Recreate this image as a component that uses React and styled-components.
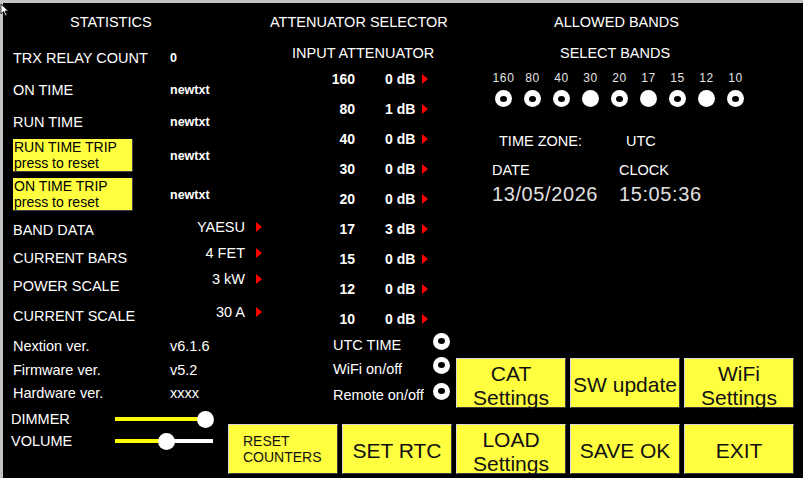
import React from 'react';
import styled, { createGlobalStyle } from 'styled-components';

const Global = createGlobalStyle`
  * { box-sizing: border-box; }
  html, body { margin: 0; padding: 0; background: #c3c3c3; }
  body { width: 803px; height: 478px; overflow: hidden; }
`;

const YELLOW = '#ffff40';

const Screen = styled.div`
  margin: 3px 0 0 3px;
  width: 800px;
  height: 475px;
  background: #000;
  color: #fff;
  display: flex;
  font-family: "Liberation Sans", Arial, sans-serif;
  font-size: 14.5px;
  position: relative;
`;

const LeftCol = styled.div`
  width: 222px;
  flex-shrink: 0;
  padding-left: 10px;
  display: flex;
  flex-direction: column;
`;

const Main = styled.div`
  flex: 1;
  display: flex;
  flex-direction: column;
`;

const Upper = styled.div`
  height: 418px;
  display: grid;
  grid-template-columns: 230px 1fr;
`;

const Column = styled.div`
  display: flex;
  flex-direction: column;
`;

const Heading = styled.div`
  height: ${({ $h }) => $h}px;
  display: flex;
  align-items: center;
  padding-left: ${({ $x }) => $x}px;
  white-space: nowrap;
`;

const Row = styled.div`
  height: ${({ $h }) => $h}px;
  margin-top: ${({ $mt }) => $mt || 0}px;
  display: flex;
  align-items: center;
  white-space: nowrap;
`;

const Label = styled.span`
  width: ${({ $w }) => $w}px;
  flex-shrink: 0;
  margin-left: ${({ $ml }) => $ml || 0}px;
`;

const Value = styled.span`
  font-size: 12.5px;
  font-weight: 700;
`;

const TripBox = styled.div`
  width: 120px;
  height: 33px;
  background: ${YELLOW};
  color: #000;
  font-size: 14px;
  line-height: 16px;
  padding: 0 0 0 1px;
  border-right: 1px solid #444;
  border-bottom: 1px solid #444;
`;

const Pick = styled.span`
  display: flex;
  align-items: center;
  margin-bottom: ${({ $lift }) => $lift * 2}px;
`;

const PickText = styled.span`
  width: 75px;
  text-align: right;
`;

const Arrow = styled.span`
  display: inline-block;
  width: 0;
  height: 0;
  margin-left: ${({ $ml }) => $ml}px;
  border-left: 6px solid #ff0000;
  border-top: 5px solid transparent;
  border-bottom: 5px solid transparent;
`;

const SliderTrack = styled.div`
  position: relative;
  width: 98px;
  height: 4px;
  background: #fff;
`;

const SliderFill = styled.div`
  height: 100%;
  background: #ffff00;
`;

const Knob = styled.div`
  position: absolute;
  top: 50%;
  width: 17px;
  height: 17px;
  margin: -8.5px 0 0 -8.5px;
  border-radius: 50%;
  background: #fff;
`;

const BandNum = styled.span`
  width: 130px;
  text-align: right;
  font-weight: 700;
  font-size: 14px;
`;

const Db = styled.span`
  margin-left: 30px;
  width: 37px;
  font-weight: 700;
  font-size: 14px;
`;

const Radio = styled.span`
  position: relative;
  display: inline-block;
  flex-shrink: 0;
  width: 17px;
  height: 17px;
  border-radius: 50%;
  background: #fff;
  margin-bottom: ${({ $mb }) => $mb || 0}px;

  &::after {
    content: '';
    display: ${({ $filled }) => ($filled ? 'none' : 'block')};
    position: absolute;
    left: 5px;
    top: 5.5px;
    width: 7px;
    height: 6px;
    border-radius: 50%;
    background: #000;
  }
`;

const BandGrid = styled.div`
  display: flex;
  padding-left: 34px;
  margin-top: 3px;
`;

const BandCell = styled.div`
  width: 29px;
  display: flex;
  flex-direction: column;
  align-items: center;
`;

const BandLabel = styled.span`
  height: 22px;
  line-height: 22px;
  font-size: 12px;
  color: #e4e4e4;
  letter-spacing: 0.6px;
  margin-bottom: 1px;
`;

const TimeRow = styled.div`
  display: flex;
  align-items: center;
  height: ${({ $h }) => $h}px;
  margin-top: ${({ $mt }) => $mt}px;
  padding-left: ${({ $x }) => $x}px;
  font-size: ${({ $big }) => ($big ? '20px' : '14.5px')};
  letter-spacing: ${({ $big }) => ($big ? '0.6px' : '0')};
  color: ${({ $big }) => ($big ? '#e0e0e0' : '#fff')};
`;

const TimeCell = styled.span`
  width: 127px;
  flex-shrink: 0;
`;

const Spacer = styled.div`
  flex: 1;
`;

const ButtonRow = styled.div`
  display: flex;
  gap: 4px;
  margin: ${({ $m }) => $m};
`;

const Button = styled.button`
  width: 110px;
  height: 50px;
  padding: ${({ $small }) => ($small ? '0 0 0 14px' : '3px 0 0')};
  background: ${YELLOW};
  color: #111;
  font-family: "Liberation Sans", Arial, sans-serif;
  font-size: ${({ $small }) => ($small ? '14px' : '21px')};
  line-height: ${({ $small }) => ($small ? '16px' : '24px')};
  text-align: ${({ $small }) => ($small ? 'left' : 'center')};
  border: 1px solid;
  border-color: #d8d8d8 #3c3c3c #3c3c3c #d8d8d8;
  border-radius: 0;
  cursor: pointer;
`;

const Cursor = styled.svg`
  position: absolute;
  left: -3px;
  top: 0;
`;

const picks = [
  { label: 'BAND DATA', value: 'YAESU', h: 30, lift: 3 },
  { label: 'CURRENT BARS', value: '4 FET', h: 26, lift: 5 },
  { label: 'POWER SCALE', value: '3 kW', h: 30, lift: 7 },
  { label: 'CURRENT SCALE', value: '30 A', h: 29, lift: 4 },
];

const versions = [
  ['Nextion ver.', 'v6.1.6', 24],
  ['Firmware ver.', 'v5.2', 23],
  ['Hardware ver.', 'xxxx', 24],
];

const attenuators = [
  ['160', 0], ['80', 1], ['40', 0], ['30', 0], ['20', 0],
  ['17', 3], ['15', 0], ['12', 0], ['10', 0],
];

const toggles = [
  ['UTC TIME', 22],
  ['WiFi on/off', 26],
  ['Remote on/off', 26],
];

const bands = [
  ['160', false], ['80', false], ['40', false], ['30', true], ['20', false],
  ['17', true], ['15', false], ['12', true], ['10', false],
];

function Slider({ value }) {
  return (
    <SliderTrack>
      <SliderFill style={{ width: `${value}%` }} />
      <Knob style={{ left: `${value}%` }} />
    </SliderTrack>
  );
}

export default function App() {
  return (
    <>
      <Global />
      <Screen>
        <Cursor width="10" height="14" viewBox="0 0 10 14">
          <path d="M1 1 L1 11 L3.5 8.5 L5.5 13 L7 12.3 L5 8 L8.5 8 Z" fill="#fff" stroke="#000" strokeWidth="0.8" />
        </Cursor>

        <LeftCol>
          <Heading $h={38} $x={57}>STATISTICS</Heading>
          <Row $h={34}>
            <Label $w={157}>TRX RELAY COUNT</Label>
            <Value>0</Value>
          </Row>
          <Row $h={30}>
            <Label $w={157}>ON TIME</Label>
            <Value>newtxt</Value>
          </Row>
          <Row $h={34}>
            <Label $w={157}>RUN TIME</Label>
            <Value>newtxt</Value>
          </Row>
          <Row $h={33}>
            <Label $w={157}>
              <TripBox>RUN TIME TRIP<br />press to reset</TripBox>
            </Label>
            <Value>newtxt</Value>
          </Row>
          <Row $h={33} $mt={6}>
            <Label $w={157}>
              <TripBox>ON TIME TRIP<br />press to reset</TripBox>
            </Label>
            <Value>newtxt</Value>
          </Row>

          {picks.map((p, i) => (
            <Row key={p.label} $h={p.h} $mt={i === 0 ? 4 : 0}>
              <Label $w={157}>{p.label}</Label>
              <Pick $lift={p.lift}>
                <PickText>{p.value}</PickText>
                <Arrow $ml={11} />
              </Pick>
            </Row>
          ))}

          {versions.map(([label, value, h], i) => (
            <Row key={label} $h={h} $mt={i === 0 ? 4 : 0}>
              <Label $w={157}>{label}</Label>
              <span>{value}</span>
            </Row>
          ))}

          <Row $h={22} $mt={3}>
            <Label $w={104} $ml={-2}>DIMMER</Label>
            <Slider value={92} />
          </Row>
          <Row $h={22}>
            <Label $w={104} $ml={-2}>VOLUME</Label>
            <Slider value={53} />
          </Row>
        </LeftCol>

        <Main>
          <Upper>
            <Column>
              <Heading $h={38} $x={45}>ATTENUATOR SELECTOR</Heading>
              <Heading $h={23} $x={67}>INPUT ATTENUATOR</Heading>
              {attenuators.map(([band, db]) => (
                <Row key={band} $h={30}>
                  <BandNum>{band}</BandNum>
                  <Db>{db} dB</Db>
                  <Arrow $ml={0} />
                </Row>
              ))}
              {toggles.map(([label, h]) => (
                <Row key={label} $h={h}>
                  <Label $w={100} $ml={108}>{label}</Label>
                  <Radio $mb={8} />
                </Row>
              ))}
            </Column>

            <Column>
              <Heading $h={38} $x={99}>ALLOWED BANDS</Heading>
              <Heading $h={23} $x={105}>SELECT BANDS</Heading>
              <BandGrid>
                {bands.map(([b, filled]) => (
                  <BandCell key={b}>
                    <BandLabel>{b}</BandLabel>
                    <Radio $filled={filled} />
                  </BandCell>
                ))}
              </BandGrid>
              <TimeRow $h={20} $mt={24} $x={44}>
                <TimeCell>TIME ZONE:</TimeCell>
                <span>UTC</span>
              </TimeRow>
              <TimeRow $h={20} $mt={9} $x={37}>
                <TimeCell>DATE</TimeCell>
                <span>CLOCK</span>
              </TimeRow>
              <TimeRow $h={28} $mt={0} $x={37} $big>
                <TimeCell>13/05/2026</TimeCell>
                <span>15:05:36</span>
              </TimeRow>
              <Spacer />
              <ButtonRow $m="0 0 13px 1px">
                <Button>CAT<br />Settings</Button>
                <Button>SW update</Button>
                <Button>WiFi<br />Settings</Button>
              </ButtonRow>
            </Column>
          </Upper>

          <ButtonRow $m="3px 0 0 3px">
            <Button $small>RESET<br />COUNTERS</Button>
            <Button>SET RTC</Button>
            <Button>LOAD<br />Settings</Button>
            <Button>SAVE OK</Button>
            <Button>EXIT</Button>
          </ButtonRow>
        </Main>
      </Screen>
    </>
  );
}
